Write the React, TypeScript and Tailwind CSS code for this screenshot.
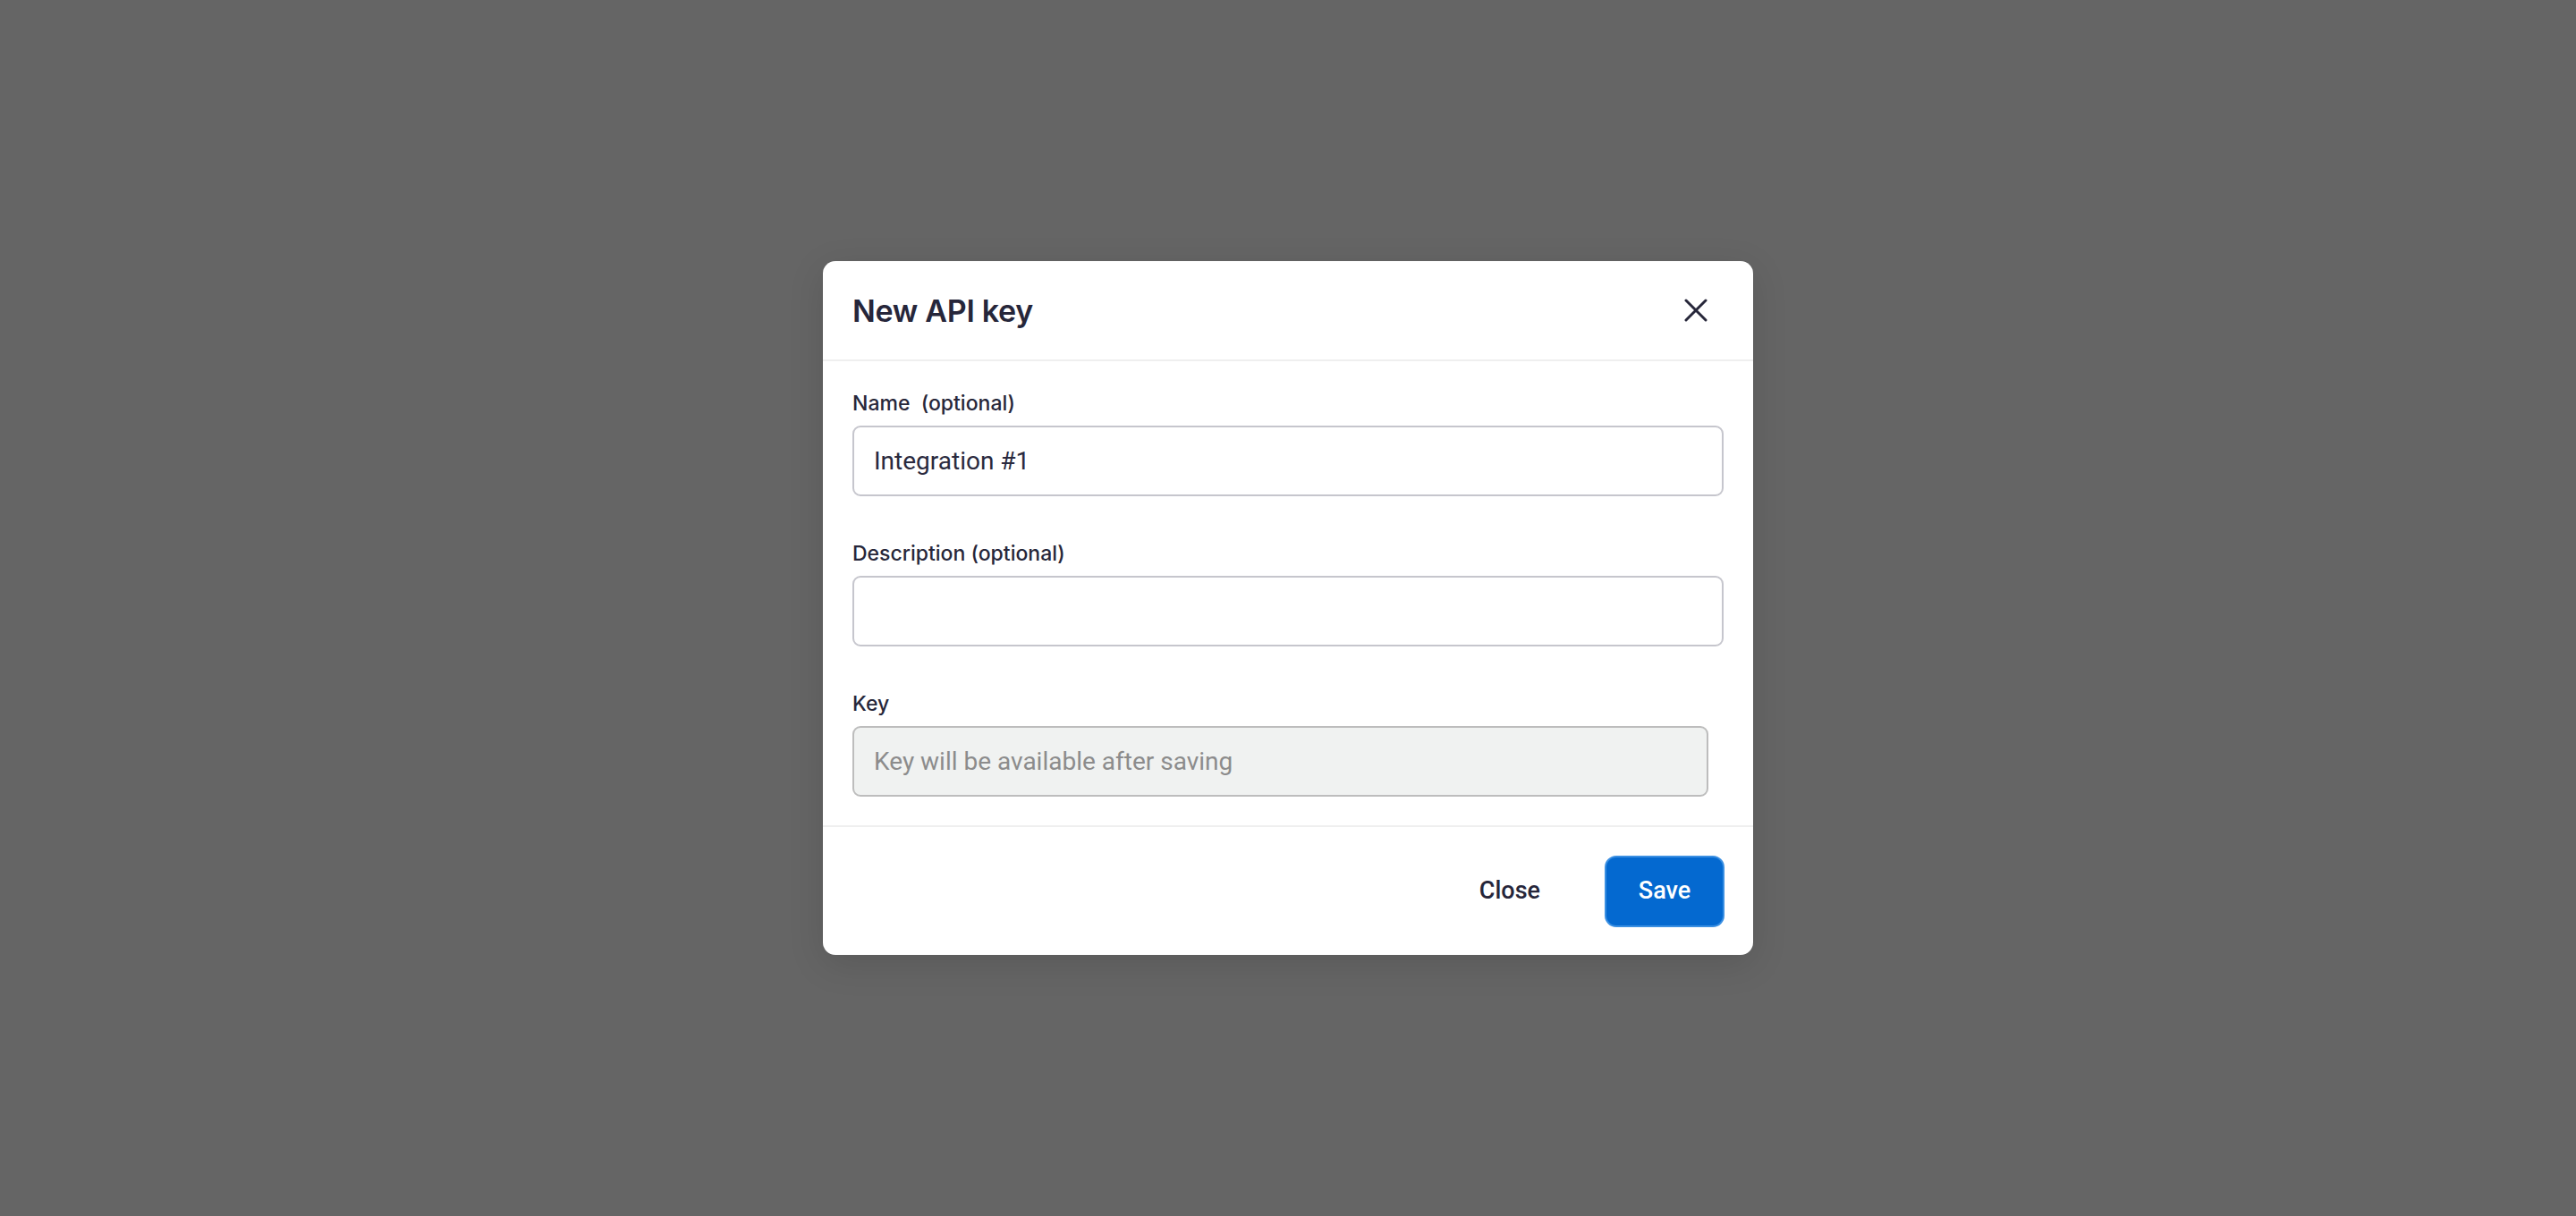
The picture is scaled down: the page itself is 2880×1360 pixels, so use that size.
import { useState } from "react";

function CloseIcon() {
  return (
    <svg width="26" height="26" viewBox="0 0 26 26" fill="none">
      <path d="M2 2L24 24M24 2L2 24" stroke="#27273a" strokeWidth="3" strokeLinecap="round" />
    </svg>
  );
}

function Field({
  label,
  value,
  onChange,
  placeholder,
  disabled,
  narrow,
}: {
  label: string;
  value: string;
  onChange?: (v: string) => void;
  placeholder?: string;
  disabled?: boolean;
  narrow?: boolean;
}) {
  return (
    <div className="flex flex-col">
      <label className="font-['Inter'] text-[23px] leading-[32px] font-medium text-[#27273a] whitespace-pre mb-[9px]">
        {label}
      </label>
      <input
        value={value}
        disabled={disabled}
        placeholder={placeholder}
        onChange={(e) => onChange?.(e.target.value)}
        className={`h-[79px] rounded-[9px] border-2 px-[22px] font-['Roboto'] text-[28px] text-[#2a2a3e] outline-none ${
          disabled
            ? "bg-[#f0f2f1] border-[#bdbdbd] placeholder:text-[#8c8c8c]"
            : "bg-white border-[#c6c6cd]"
        } ${narrow ? "w-[957px]" : "w-full"}`}
      />
    </div>
  );
}

export default function App() {
  const [name, setName] = useState("Integration #1");
  const [desc, setDesc] = useState("");

  return (
    <div className="w-full h-[1360px] bg-[#656565] flex items-start justify-center pt-[292px]">
      <div className="w-[1040px] bg-white rounded-[14px] shadow-[0_10px_40px_rgba(0,0,0,0.12)] flex flex-col overflow-hidden">
        {/* Header */}
        <div className="h-[112px] flex items-center justify-between pl-[33px] pr-[51px] border-b-2 border-[#efefef]">
          <h2 className="font-['Inter'] text-[34px] font-semibold text-[#26263a] tracking-[-0.3px]">
            New API key
          </h2>
          <button className="flex items-center justify-center">
            <CloseIcon />
          </button>
        </div>

        {/* Body */}
        <div className="flex flex-col gap-[48px] px-[33px] pt-[31px] pb-[32px]">
          <Field label="Name  (optional)" value={name} onChange={setName} />
          <Field label="Description (optional)" value={desc} onChange={setDesc} />
          <Field label="Key" value="" placeholder="Key will be available after saving" disabled narrow />
        </div>

        {/* Footer */}
        <div className="h-[145px] border-t-2 border-[#efefef] flex items-center justify-end gap-[36px] pr-[32px]">
          <button className="h-[80px] px-[36px] font-['Roboto'] text-[27px] font-medium text-[#26263a]">
            Close
          </button>
          <button className="h-[80px] w-[134px] rounded-[13px] bg-[#0469d0] border-2 border-[#3a8fe2] font-['Roboto'] text-[27px] font-medium text-white">
            Save
          </button>
        </div>
      </div>
    </div>
  );
}
